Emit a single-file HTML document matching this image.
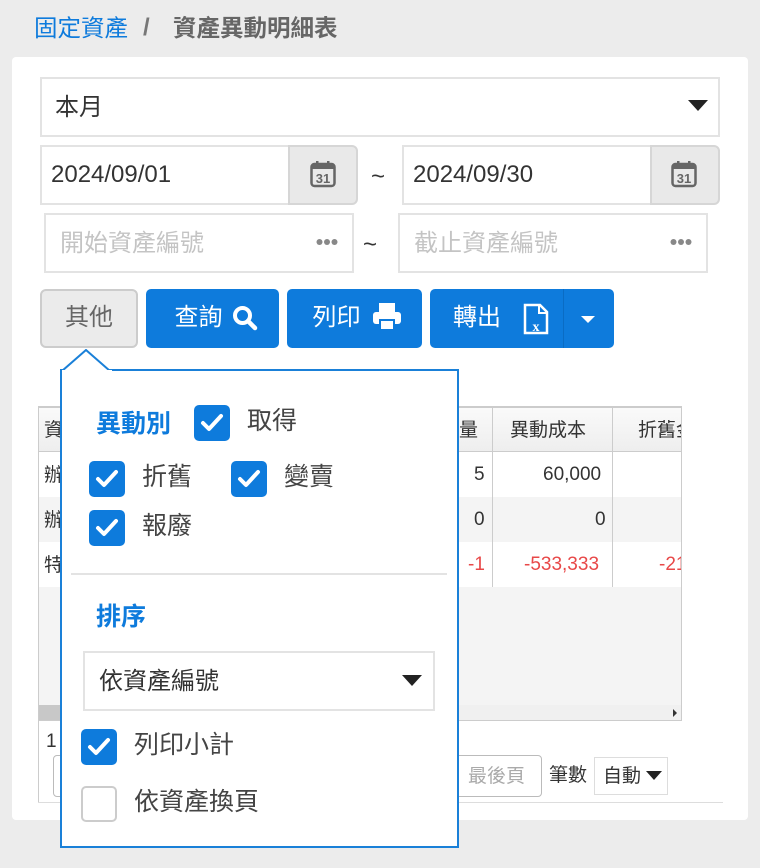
<!DOCTYPE html>
<html><head><meta charset="utf-8"><style>
*{box-sizing:border-box;margin:0;padding:0}
body{width:760px;height:868px;background:#ececec;font-family:"Liberation Sans","Noto Sans CJK TC",sans-serif;position:relative;overflow:hidden;color:#333}
.a{position:absolute}
.card{left:12px;top:57px;width:736px;height:763px;background:#fff;border-radius:4px}
.inp{border:2px solid #e3e3e3;background:#fff;font-size:24px;color:#333}
.btn{background:#0e7bdc;border-radius:5px;color:#fff;font-size:24px;text-align:center}
.cb{width:36px;height:36px;border-radius:5px;background:#0e7bdc}
.cb svg{position:absolute;left:6px;top:7px}
.lbl{font-size:25px;color:#444}
.blue{color:#0e7bdc;font-weight:bold;font-size:24px}
.cal{background:#e9e9e9;border:2px solid #d6d6d6;border-radius:0 6px 6px 0}
</style></head><body>
<div class="a" style="left:34px;top:9px;font-size:23.5px;color:#0e7bdc">固定資產</div>
<div class="a" style="left:143px;top:14px;font-size:24px;color:#777;font-weight:bold">/</div>
<div class="a" style="left:173px;top:9px;font-size:23.5px;color:#666;font-weight:bold">資產異動明細表</div>
<div class="a card"></div>
<div class="a inp" style="left:40px;top:77px;width:680px;height:60px;padding:8px 13px">本月</div>
<div class="a" style="left:688px;top:100px;border-left:10px solid transparent;border-right:10px solid transparent;border-top:11px solid #222"></div>

<div class="a inp" style="left:40px;top:145px;width:250px;height:60px;padding:14px 9px">2024/09/01</div>
<div class="a cal" style="left:288px;top:145px;width:70px;height:60px"></div>
<div class="a inp" style="left:402px;top:145px;width:250px;height:60px;padding:14px 9px">2024/09/30</div>
<div class="a cal" style="left:650px;top:145px;width:70px;height:60px"></div>
<svg class="a" style="left:310px;top:160px" width="26" height="28" viewBox="0 0 26 28"><rect x="1.5" y="4" width="23" height="22" rx="3" fill="none" stroke="#666" stroke-width="2.5"/><rect x="1.5" y="4" width="23" height="5" fill="#666"/><rect x="6" y="1" width="2.5" height="6" fill="#666"/><rect x="17" y="1" width="2.5" height="6" fill="#666"/><text x="13" y="23" font-size="13" font-weight="bold" fill="#666" text-anchor="middle" font-family="Liberation Sans">31</text></svg>
<svg class="a" style="left:671px;top:160px" width="26" height="28" viewBox="0 0 26 28"><rect x="1.5" y="4" width="23" height="22" rx="3" fill="none" stroke="#666" stroke-width="2.5"/><rect x="1.5" y="4" width="23" height="5" fill="#666"/><rect x="6" y="1" width="2.5" height="6" fill="#666"/><rect x="17" y="1" width="2.5" height="6" fill="#666"/><text x="13" y="23" font-size="13" font-weight="bold" fill="#666" text-anchor="middle" font-family="Liberation Sans">31</text></svg>
<div class="a" style="left:371px;top:163px;font-size:24px">~</div>

<div class="a inp" style="left:44px;top:213px;width:310px;height:60px;padding:8px 14px;color:#c4c4c4">開始資產編號</div>
<svg class="a" style="left:316px;top:238px" width="22" height="8"><circle cx="3.5" cy="4" r="3" fill="#888"/><circle cx="11" cy="4" r="3" fill="#888"/><circle cx="18.5" cy="4" r="3" fill="#888"/></svg>
<div class="a" style="left:363px;top:231px;font-size:24px">~</div>
<div class="a inp" style="left:398px;top:213px;width:310px;height:60px;padding:8px 14px;color:#c4c4c4">截止資產編號</div>
<svg class="a" style="left:670px;top:238px" width="22" height="8"><circle cx="3.5" cy="4" r="3" fill="#888"/><circle cx="11" cy="4" r="3" fill="#888"/><circle cx="18.5" cy="4" r="3" fill="#888"/></svg>

<div class="a" style="left:40px;top:289px;width:98px;height:59px;background:#ebebeb;border:2px solid #ccc;border-radius:6px;font-size:24px;color:#666;text-align:center;line-height:53px">其他</div>
<div class="a btn" style="left:146px;top:289px;width:133px;height:59px;line-height:57px;padding-right:28px">查詢</div>
<svg class="a" style="left:232px;top:305px" width="26" height="26" viewBox="0 0 26 26"><circle cx="10.5" cy="10.5" r="7.5" fill="none" stroke="#fff" stroke-width="4"/><path d="M16 16l7 7" stroke="#fff" stroke-width="4.5" stroke-linecap="round"/></svg>
<div class="a btn" style="left:287px;top:289px;width:135px;height:59px;line-height:57px;padding-right:36px">列印</div>
<svg class="a" style="left:372px;top:302px" width="30" height="28" viewBox="0 0 30 28"><rect x="7" y="1" width="16" height="9" fill="#fff"/><rect x="1" y="10" width="28" height="12" rx="3" fill="#fff"/><rect x="7" y="17" width="16" height="10" fill="#0e7bdc"/><rect x="9" y="19" width="12" height="8" fill="#fff"/></svg>
<div class="a btn" style="left:430px;top:289px;width:184px;height:59px"></div>
<div class="a" style="left:563px;top:289px;width:1px;height:59px;background:#0a6cc4"></div>
<div class="a" style="left:453px;top:297px;font-size:24px;color:#fff">轉出</div>
<svg class="a" style="left:523px;top:303px" width="26" height="32" viewBox="0 0 26 32"><path d="M2 2h15l7 7v21H2z" fill="none" stroke="#fff" stroke-width="2.5"/><path d="M16 2v8h8" fill="none" stroke="#fff" stroke-width="2"/><text x="13" y="28" font-size="14" font-weight="bold" fill="#fff" text-anchor="middle" font-family="Liberation Serif">x</text></svg>
<div class="a" style="left:581px;top:316px;border-left:7px solid transparent;border-right:7px solid transparent;border-top:7px solid #fff"></div>

<!-- grid -->
<div class="a" style="left:38px;top:406px;width:644px;height:315px;border:1px solid #ccc;border-top:2px solid #ccc;background:#f4f4f4"></div>
<div class="a" style="left:39px;top:408px;width:642px;height:44px;background:linear-gradient(#fafafa,#eee);border-bottom:1px solid #ccc"></div>
<div class="a" style="left:39px;top:452px;width:642px;height:45px;background:#fff"></div>
<div class="a" style="left:39px;top:497px;width:642px;height:45px;background:#f4f4f4"></div>
<div class="a" style="left:39px;top:542px;width:642px;height:45px;background:#fff"></div>
<div class="a" style="left:492px;top:408px;width:1px;height:179px;background:#ccc"></div>
<div class="a" style="left:612px;top:408px;width:1px;height:179px;background:#ccc"></div>
<div class="a" style="left:39px;top:705px;width:642px;height:15px;background:#f0f0f0"></div>
<div class="a" style="left:39px;top:705px;width:22px;height:15px;background:#c8c8c8"></div>
<div class="a" style="left:673px;top:709px;border-top:4px solid transparent;border-bottom:4px solid transparent;border-left:4px solid #333"></div>
<div class="a" style="left:44px;top:415px;font-size:19px">資</div>
<div class="a" style="left:44px;top:460px;font-size:19px">辦</div>
<div class="a" style="left:44px;top:505px;font-size:19px">辦</div>
<div class="a" style="left:44px;top:550px;font-size:19px">特</div>
<div class="a" style="left:459px;top:415px;font-size:19px">量</div>
<div class="a" style="left:510px;top:415px;font-size:19px">異動成本</div>
<div class="a" style="left:638px;top:415px;font-size:19px;width:43px;overflow:hidden;white-space:nowrap">折舊金</div>
<div class="a" style="left:474px;top:464px;font-size:19px">5</div>
<div class="a" style="left:543px;top:464px;font-size:19px">60,000</div>
<div class="a" style="left:474px;top:509px;font-size:19px">0</div>
<div class="a" style="left:595px;top:509px;font-size:19px">0</div>
<div class="a" style="left:468px;top:554px;font-size:19px;color:#e84848">-1</div>
<div class="a" style="left:524px;top:554px;font-size:19px;color:#e84848">-533,333</div>
<div class="a" style="left:659px;top:554px;font-size:19px;color:#e84848;width:22px;overflow:hidden;white-space:nowrap">-21</div>
<div class="a" style="left:38px;top:721px;width:1px;height:82px;background:#ccc"></div>
<div class="a" style="left:38px;top:802px;width:685px;height:1px;background:#ddd"></div>
<div class="a" style="left:46px;top:731px;font-size:19px">1</div>
<div class="a" style="left:53px;top:755px;width:8px;height:42px;border:1px solid #bbb;border-radius:4px 0 0 4px"></div>
<div class="a" style="left:440px;top:755px;width:102px;height:42px;border:1px solid #bbb;border-radius:0 4px 4px 0;font-size:19px;color:#aaa;padding:5px 0 0 27px">最後頁</div>
<div class="a" style="left:549px;top:760px;font-size:19px">筆數</div>
<div class="a" style="left:594px;top:757px;width:74px;height:38px;border:1px solid #ddd;font-size:19px;padding:3px 0 0 8px">自動</div>
<div class="a" style="left:646px;top:771px;border-left:8px solid transparent;border-right:8px solid transparent;border-top:9px solid #222"></div>

<!-- popup -->
<div class="a" style="left:60px;top:369px;width:399px;height:479px;background:#fff;border:2px solid #1a80d8"></div>
<svg class="a" style="left:62px;top:349px" width="50" height="23"><path d="M0 22L24 1L48 22" fill="#fff" stroke="#1a80d8" stroke-width="2"/><rect x="0" y="21" width="50" height="3" fill="#fff"/></svg>
<div class="a blue" style="left:96px;top:404px;font-size:25px">異動別</div>
<div class="a cb" style="left:194px;top:405px"><svg width="24" height="22"><path d="M3 11l6 6L21 4" fill="none" stroke="#fff" stroke-width="4" stroke-linecap="round" stroke-linejoin="round"/></svg></div>
<div class="a lbl" style="left:247px;top:401px">取得</div>
<div class="a cb" style="left:89px;top:461px"><svg width="24" height="22"><path d="M3 11l6 6L21 4" fill="none" stroke="#fff" stroke-width="4" stroke-linecap="round" stroke-linejoin="round"/></svg></div>
<div class="a lbl" style="left:142px;top:457px">折舊</div>
<div class="a cb" style="left:231px;top:461px"><svg width="24" height="22"><path d="M3 11l6 6L21 4" fill="none" stroke="#fff" stroke-width="4" stroke-linecap="round" stroke-linejoin="round"/></svg></div>
<div class="a lbl" style="left:284px;top:457px">變賣</div>
<div class="a cb" style="left:89px;top:510px"><svg width="24" height="22"><path d="M3 11l6 6L21 4" fill="none" stroke="#fff" stroke-width="4" stroke-linecap="round" stroke-linejoin="round"/></svg></div>
<div class="a lbl" style="left:142px;top:506px">報廢</div>
<div class="a" style="left:71px;top:573px;width:376px;height:2px;background:#e3e3e3"></div>
<div class="a blue" style="left:96px;top:597px;font-size:25px">排序</div>
<div class="a inp" style="left:83px;top:651px;width:352px;height:60px;padding:8px 14px">依資產編號</div>
<div class="a" style="left:402px;top:675px;border-left:10px solid transparent;border-right:10px solid transparent;border-top:11px solid #222"></div>
<div class="a cb" style="left:81px;top:729px"><svg width="24" height="22"><path d="M3 11l6 6L21 4" fill="none" stroke="#fff" stroke-width="4" stroke-linecap="round" stroke-linejoin="round"/></svg></div>
<div class="a lbl" style="left:134px;top:725px">列印小計</div>
<div class="a" style="left:81px;top:786px;width:36px;height:36px;border:2px solid #ccc;border-radius:5px;background:#fff"></div>
<div class="a lbl" style="left:134px;top:782px">依資產換頁</div>
</body></html>
